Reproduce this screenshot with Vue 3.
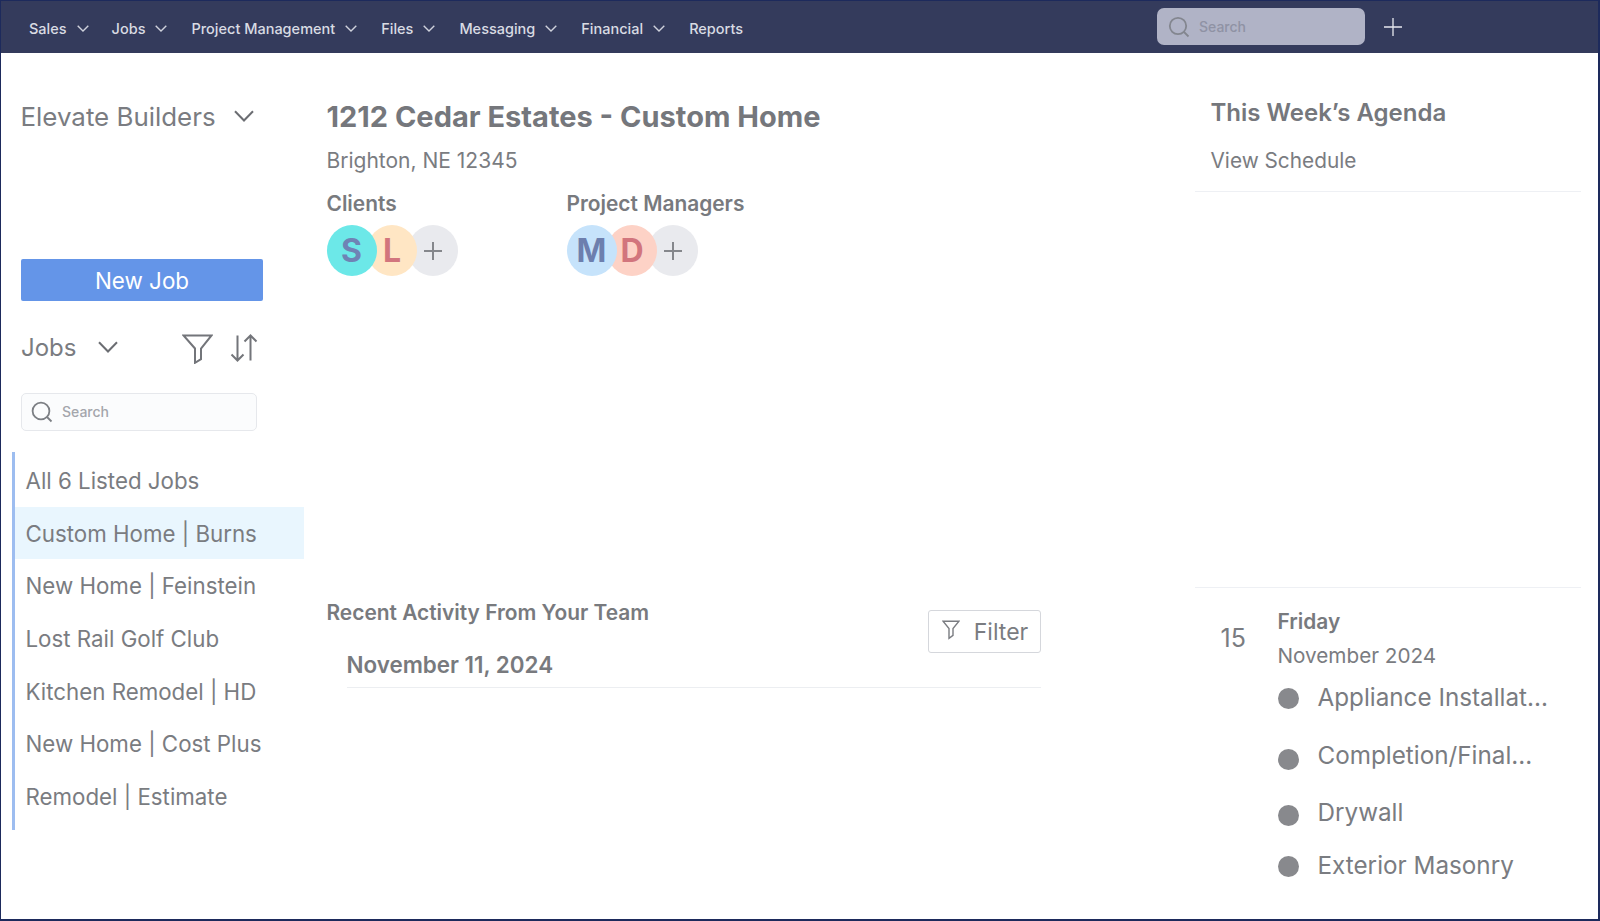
<script setup>
const navItems = [
  { label: 'Sales', caret: true },
  { label: 'Jobs', caret: true },
  { label: 'Project Management', caret: true },
  { label: 'Files', caret: true },
  { label: 'Messaging', caret: true },
  { label: 'Financial', caret: true },
  { label: 'Reports', caret: false }
]
const jobs = [
  { name: 'All 6 Listed Jobs' },
  { name: 'Custom Home | Burns', active: true },
  { name: 'New Home | Feinstein' },
  { name: 'Lost Rail Golf Club' },
  { name: 'Kitchen Remodel | HD' },
  { name: 'New Home | Cost Plus' },
  { name: 'Remodel | Estimate' }
]
const agenda = ['Appliance Installat...', 'Completion/Final...', 'Drywall', 'Exterior Masonry']
const clients = [
  { text: 'S', cls: 'a-teal' },
  { text: 'L', cls: 'a-peach' }
]
const managers = [
  { text: 'M', cls: 'a-blue' },
  { text: 'D', cls: 'a-rose' }
]
const groups = [
  { title: 'Clients', people: clients, cls: 'g-clients' },
  { title: 'Project Managers', people: managers, cls: 'g-managers' }
]
</script>

<template>
  <div class="page">
    <header class="nav">
      <ul class="nav-list">
        <li v-for="item in navItems" :key="item.label" class="nav-item">
          <span>{{ item.label }}</span>
          <svg v-if="item.caret" class="nav-caret" viewBox="0 0 12 7" fill="none"><path d="M.7.8 6 6l5.3-5.2" /></svg>
        </li>
      </ul>
      <div class="nav-search">
        <svg class="nav-search-icon" viewBox="0 0 22 22" fill="none"><circle cx="10" cy="10" r="8.2" /><path d="m16 16 4.5 4.5" /></svg>
        <span>Search</span>
      </div>
      <svg class="nav-plus" viewBox="0 0 18 18" fill="none"><path d="M9 0v18M0 9h18" /></svg>
    </header>

    <main class="body">
      <aside class="side">
        <div class="brand">
          <span>Elevate Builders</span>
          <svg class="brand-caret" viewBox="0 0 20 12" fill="none"><path d="M1 1.2 10 10.5l9-9.3" /></svg>
        </div>
        <button class="new-job">New Job</button>
        <div class="jobs-head">
          <span>Jobs</span>
          <svg class="jobs-caret" viewBox="0 0 20 12" fill="none"><path d="M1 1.2 10 10.5l9-9.3" /></svg>
          <svg class="jobs-filter" viewBox="0 0 31 30" fill="none"><path d="M1.5 1.5h28L19 14.5v10.6l-6 3.7V14.5z" /></svg>
          <svg class="jobs-sort" viewBox="0 0 28 28" fill="none"><path d="M7.5 1.5v25M1.5 20.5l6 6 6-6M20.5 26.5v-25M14.5 7.5l6-6 6 6" /></svg>
        </div>
        <div class="side-search">
          <svg class="side-search-icon" viewBox="0 0 22 22" fill="none"><circle cx="10" cy="10" r="8.4" /><path d="m16 16 4.5 4.5" /></svg>
          <span>Search</span>
        </div>
        <ul class="job-list">
          <li v-for="job in jobs" :key="job.name" class="job" :class="{ 'job-active': job.active }">{{ job.name }}</li>
        </ul>
      </aside>

      <section class="center">
        <h1 class="title">1212 Cedar Estates - Custom Home</h1>
        <p class="address">Brighton, NE 12345</p>
        <div class="people">
          <div v-for="g in groups" :key="g.title" class="group" :class="g.cls">
            <div class="group-title">{{ g.title }}</div>
            <div class="avatars">
              <span v-for="p in g.people" :key="p.text" class="avatar" :class="p.cls">{{ p.text }}</span>
              <span class="avatar a-add">
                <svg viewBox="0 0 20 20" fill="none"><path d="M10 1v18M1 10h18" /></svg>
              </span>
            </div>
          </div>
        </div>
        <div class="activity">
          <h2 class="activity-title">Recent Activity From Your Team</h2>
          <button class="filter">
            <svg viewBox="0 0 18 20" fill="none"><path d="M1 1.2h16l-6 7.4v6.8l-4 3V8.6z" /></svg>
            <span>Filter</span>
          </button>
          <div class="activity-date">November 11, 2024</div>
        </div>
      </section>

      <aside class="agenda">
        <h2 class="agenda-title">This Week’s Agenda</h2>
        <div class="agenda-link">View Schedule</div>
        <div class="rule rule-one"></div>
        <div class="rule rule-two"></div>
        <div class="day">
          <div class="day-num">15</div>
          <div class="day-main">
            <div class="day-name">Friday</div>
            <div class="day-month">November 2024</div>
            <ul class="tasks">
              <li v-for="t in agenda" :key="t" class="task">
                <i class="dot"></i>
                <span>{{ t }}</span>
              </li>
            </ul>
          </div>
        </div>
      </aside>
    </main>
  </div>
</template>

<style scoped>
* { box-sizing: border-box; }
.page {
  width: 1600px; height: 921px; overflow: hidden; background: #fff;
  border: solid #1d2a5c; border-width: 1px 2px 2px 1px;
  font-family: Inter, "Liberation Sans", sans-serif; color: #7a7c81;
  display: flex; flex-direction: column;
}
ul { list-style: none; margin: 0; padding: 0; }
h1, h2, p { margin: 0; }
button { font-family: inherit; cursor: pointer; }

.nav {
  height: 52px; flex: none; background: #343b5c; display: flex; align-items: center;
  padding-left: 28px; color: #d9dbe3; font-size: 14.5px; font-weight: 500;
}
.nav-list { display: flex; align-items: center; gap: 24px; width: 1128px; padding-top: 3px; }
.nav-item { display: flex; align-items: center; gap: 10px; }
.nav-item:first-child { margin-right: -1px; }
.nav-caret { width: 12px; height: 7px; stroke: #cfd2dc; stroke-width: 1.4; }
.nav-search {
  width: 208px; height: 37px; margin-top: -1px; background: #b0b3c6; border-radius: 7px;
  display: flex; align-items: center; padding-left: 11px; gap: 9px;
  color: #8f92a4; font-size: 14px; font-weight: 500;
}
.nav-search-icon { width: 22px; height: 22px; stroke: #83868f; stroke-width: 1.8; }
.nav-plus { width: 18px; height: 18px; margin-left: 19px; margin-top: -1px; stroke: #e6e8ee; stroke-width: 1.3; }

.body { flex: 1; display: flex; min-height: 0; }

.side { width: 303px; flex: none; padding-top: 45px; }
.brand {
  margin-left: 19.5px; height: 36px; display: flex; align-items: center;
  font-size: 25.9px; color: #7a7c81;
}
.brand-caret { width: 20px; height: 12px; margin-left: 18px; stroke: #6b6d72; stroke-width: 2; }
.new-job {
  display: block; margin: 125px 0 0 20px; width: 242px; height: 42px; border: 0; border-radius: 2px;
  background: #6495e8; color: #fff; font-size: 22.4px;
}
.jobs-head {
  margin: 26px 0 0 20px; height: 40px; display: flex; align-items: center; font-size: 24px;
}
.jobs-caret { width: 20px; height: 12px; margin-left: 22px; stroke: #6b6d72; stroke-width: 2; }
.jobs-filter { width: 31px; height: 30px; margin: 3px 0 0 64px; stroke: #73757a; stroke-width: 2; }
.jobs-sort { width: 28px; height: 28px; margin: 2px 0 0 17px; stroke: #73757a; stroke-width: 2; }
.side-search {
  margin: 26px 0 0 20px; width: 236px; height: 38px; border: 1px solid #e6e8ec; border-radius: 5px;
  background: #fbfcfd; display: flex; align-items: center; padding: 0 0 1px 9px; gap: 9px;
  font-size: 14px; font-weight: 500; color: #a4a6ac;
}
.side-search-icon { width: 22px; height: 22px; stroke: #7c7f84; stroke-width: 1.8; }
.job-list { margin: 21px 0 0 11px; border-left: 3px solid #9dbdf0; padding: 2px 0 7px; }
.job {
  height: 52.7px; display: flex; align-items: center; padding-left: 10.5px;
  font-size: 22.3px; color: #7a7c81;
}
.job-active { background: #e9f6fe; }

.center { width: 714px; flex: none; margin-left: 22.5px; padding-top: 46px; }
.title { height: 36px; line-height: 36px; font-size: 29px; font-weight: 700; color: #75777c; white-space: nowrap; }
.address { margin-top: 13px; height: 26px; line-height: 26px; font-size: 21px; }
.people { display: flex; margin-top: 18px; }
.group-title { height: 24px; line-height: 24px; font-size: 20.9px; font-weight: 600; color: #787a7e; }
.g-clients { width: 240px; }
.avatars { display: flex; margin-top: 9px; }
.avatar {
  width: 50px; height: 51px; border-radius: 50%; display: flex; align-items: center; justify-content: center;
  font-size: 32px; font-weight: 700; margin-right: -9.5px; position: relative;
}
.avatar:nth-child(1) { z-index: 3; }
.avatar:nth-child(2) { z-index: 2; }
.a-teal { background: #6ce8e8; color: #6f83b5; }
.a-peach { background: #ffe6c4; color: #d2757d; }
.a-blue { background: #c6e3fb; color: #6d7fae; }
.a-rose { background: #fdd2c6; color: #d2757d; }
.a-add { background: #e9eaee; }
.a-add svg { width: 20px; height: 20px; stroke: #85878c; stroke-width: 2; }

.activity {
  margin-top: 325px; display: grid; grid-template-columns: 1fr 113px; grid-template-rows: 50px 37px;
}
.activity-title { font-size: 20.9px; font-weight: 600; line-height: 24px; color: #787a7e; }
.filter {
  grid-column: 2; grid-row: 1 / span 2; height: 43px; margin-top: 9px; border: 1.5px solid #d5d7dc; border-radius: 3px;
  background: #fff; color: #7a7c81; font-size: 23px; display: flex; align-items: center; justify-content: center; gap: 14px; padding: 0 0 0 2px;
}
.filter svg { width: 18px; height: 20px; margin-top: -3px; stroke: #7a7c81; stroke-width: 1.4; }
.activity-date {
  grid-column: 1 / span 2; grid-row: 2; margin-left: 20px; border-bottom: 1px solid #eceef1;
  height: 37px; line-height: 28px; font-size: 22.4px; font-weight: 600; color: #787a7e;
}

.agenda { width: 386px; flex: none; margin-left: 154px; padding-top: 45px; }
.agenda-title { margin-left: 16px; height: 30px; line-height: 30px; font-size: 24px; font-weight: 600; color: #75777c; }
.agenda-link { margin: 19px 0 0 16px; height: 28px; line-height: 28px; font-size: 20.8px; }
.rule { height: 1px; background: #eef0f4; }
.rule-one { margin-top: 16px; }
.rule-two { margin-top: 395px; }
.day { display: flex; }
.day-num { width: 83px; padding: 37px 0 0 26px; line-height: 26px; font-size: 25px; color: #7a7c81; }
.day-main { flex: 1; padding-top: 22px; }
.day-name { height: 24px; line-height: 24px; font-size: 20.9px; font-weight: 600; color: #787a7e; }
.day-month { margin-top: 10px; height: 24px; line-height: 24px; font-size: 20.7px; }
.tasks { margin-top: 3px; }
.task { height: 57.5px; display: flex; align-items: center; gap: 19px; font-size: 24.25px; white-space: nowrap; }
.task:nth-child(1) .dot { margin-top: -2px; }
.task:nth-child(2) .dot { margin-top: 4px; }
.task:nth-child(3) .dot { margin-top: 2px; }
.task:nth-child(4) { margin-top: -5px; }
.task:nth-child(4) .dot { margin-top: -2px; }
.task span { margin-top: -4px; }
.dot { width: 21px; height: 21px; border-radius: 50%; background: #88898d; flex: none; }
</style>
